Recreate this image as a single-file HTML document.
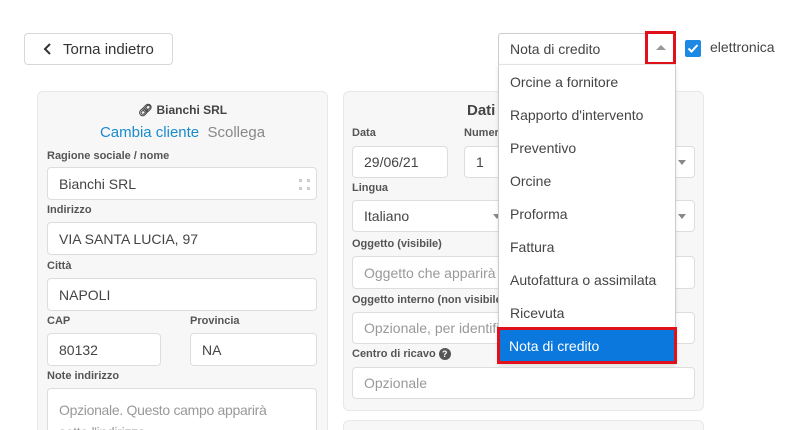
<!DOCTYPE html>
<html><head><meta charset="utf-8"><style>
*{box-sizing:border-box;margin:0;padding:0}
html,body{width:800px;height:430px;overflow:hidden}
body{background:#fff;font-family:"Liberation Sans",sans-serif;color:#333;position:relative}
.a{position:absolute}
.panel{position:absolute;background:#f7f7f7;border:1px solid #e8e8e8;border-radius:6px}
.lbl{position:absolute;font-size:11px;font-weight:bold;color:#555}
.in{position:absolute;background:#fff;border:1px solid #ddd;border-radius:4px;font-size:14px;color:#444;padding-left:11px;display:flex;align-items:center}
.ph{color:#999}
.arr{position:absolute;width:0;height:0;border-left:4px solid transparent;border-right:4px solid transparent;border-top:5px solid #888}
.item{position:absolute;left:0;width:176px;height:33px;padding-left:11px;font-size:14px;color:#444;display:flex;align-items:center}
</style></head><body>
<div class="a" style="left:24px;top:33px;width:149px;height:32px;border:1px solid #d8d8d8;border-radius:4px;font-size:15px;color:#333;display:flex;align-items:center;padding-left:18px">
<svg width="10" height="14" viewBox="0 0 10 14" style="margin-right:10px"><path d="M7 2L2 7l5 5" stroke="#333" stroke-width="2" fill="none"/></svg>Torna indietro</div>

<div class="panel" style="left:37px;top:91px;width:291px;height:339px;border-bottom:none;border-radius:6px 6px 0 0"></div>
<div class="a" style="left:37px;top:103px;width:291px;text-align:center;font-size:12px;font-weight:bold;color:#444">&#x1F517;&#xFE0E; Bianchi SRL</div>
<div class="a" style="left:37px;top:124px;width:291px;text-align:center;font-size:15px"><span style="color:#1a8ad0">Cambia cliente</span>&nbsp; <span style="color:#888">Scollega</span></div>
<div class="lbl" style="left:47px;top:150px">Ragione sociale / nome</div>
<div class="in" style="left:47px;top:167px;width:270px;height:33px">Bianchi SRL<span style="position:absolute;right:6px;top:11px;width:11px;height:11px;border:3px dotted #ccc"></span></div>
<div class="lbl" style="left:47px;top:204px">Indirizzo</div>
<div class="in" style="left:47px;top:222px;width:270px;height:33px">VIA SANTA LUCIA, 97</div>
<div class="lbl" style="left:47px;top:260px">Città</div>
<div class="in" style="left:47px;top:278px;width:270px;height:33px">NAPOLI</div>
<div class="lbl" style="left:47px;top:315px">CAP</div>
<div class="lbl" style="left:190px;top:315px">Provincia</div>
<div class="in" style="left:47px;top:333px;width:114px;height:33px">80132</div>
<div class="in" style="left:190px;top:333px;width:127px;height:33px">NA</div>
<div class="lbl" style="left:47px;top:370px">Note indirizzo</div>
<div class="in ph" style="left:47px;top:388px;width:270px;height:42px;overflow:hidden;border-bottom:none;border-radius:4px 4px 0 0;display:block;padding-top:10px;line-height:22px;letter-spacing:-0.3px">Opzionale. Questo campo apparirà<br>sotto l'indirizzo</div>

<div class="panel" style="left:343px;top:91px;width:361px;height:320px"></div>
<div class="panel" style="left:343px;top:420px;width:361px;height:10px;border-bottom:none;border-radius:6px 6px 0 0"></div>
<div class="a" style="left:467px;top:102px;font-size:15px;font-weight:bold;color:#444">Dati</div>
<div class="lbl" style="left:352px;top:127px">Data</div>
<div class="lbl" style="left:464px;top:127px">Numero</div>
<div class="in" style="left:352px;top:146px;width:96px;height:32px">29/06/21</div>
<div class="in" style="left:464px;top:146px;width:231px;height:32px">1<span class="arr" style="left:213px;top:13px"></span></div>
<div class="lbl" style="left:352px;top:182px">Lingua</div>
<div class="in" style="left:352px;top:200px;width:160px;height:32px">Italiano<span class="arr" style="left:140px;top:13px"></span></div>
<div class="in" style="left:520px;top:200px;width:175px;height:32px"><span class="arr" style="left:157px;top:13px"></span></div>
<div class="lbl" style="left:352px;top:238px">Oggetto (visibile)</div>
<div class="in ph" style="left:352px;top:256px;width:343px;height:33px">Oggetto che apparirà</div>
<div class="lbl" style="left:352px;top:294px">Oggetto interno (non visibile)</div>
<div class="in ph" style="left:352px;top:312px;width:343px;height:32px">Opzionale, per identificare</div>
<div class="lbl" style="left:352px;top:348px">Centro di ricavo <span style="display:inline-block;width:12px;height:12px;border-radius:50%;background:#555;color:#fff;font-size:9px;text-align:center;line-height:12px">?</span></div>
<div class="in ph" style="left:352px;top:367px;width:343px;height:32px">Opzionale</div>

<div class="a" style="left:498px;top:33px;width:178px;height:32px;background:#fff;border:1px solid #ccc;border-radius:3px 3px 0 0;font-size:14px;color:#444;padding-left:11px;display:flex;align-items:center">Nota di credito</div>
<div class="a" style="left:645px;top:31px;width:31px;height:34px;border:3px solid #e0111b"></div>
<div class="a" style="left:656px;top:45px;width:0;height:0;border-left:5px solid transparent;border-right:5px solid transparent;border-bottom:5px solid #999"></div>
<div class="a" style="left:498px;top:64px;width:178px;height:300px;background:#fff;border:1px solid #ccc;border-top:1px solid #e2e2e2;box-shadow:0 2px 4px rgba(0,0,0,.1)">
<div class="item" style="top:0">Orcine a fornitore</div>
<div class="item" style="top:33px">Rapporto d'intervento</div>
<div class="item" style="top:66px">Preventivo</div>
<div class="item" style="top:99px">Orcine</div>
<div class="item" style="top:132px">Proforma</div>
<div class="item" style="top:165px">Fattura</div>
<div class="item" style="top:198px">Autofattura o assimilata</div>
<div class="item" style="top:231px">Ricevuta</div>
</div>
<div class="a" style="left:497px;top:327px;width:180px;height:37px;border:3px solid #e0111b;background:#0a78dc;color:#fff;font-size:14px;padding-left:9px;display:flex;align-items:center">Nota di credito</div>

<div class="a" style="left:685px;top:40px;width:16px;height:17px;background:#1e88e5;border-radius:2px"><svg width="16" height="17"><path d="M3.5 8.5l3 3 6-6.5" stroke="#fff" stroke-width="2" fill="none"/></svg></div>
<div class="a" style="left:710px;top:39px;font-size:14px;color:#444">elettronica</div>
</body></html>
